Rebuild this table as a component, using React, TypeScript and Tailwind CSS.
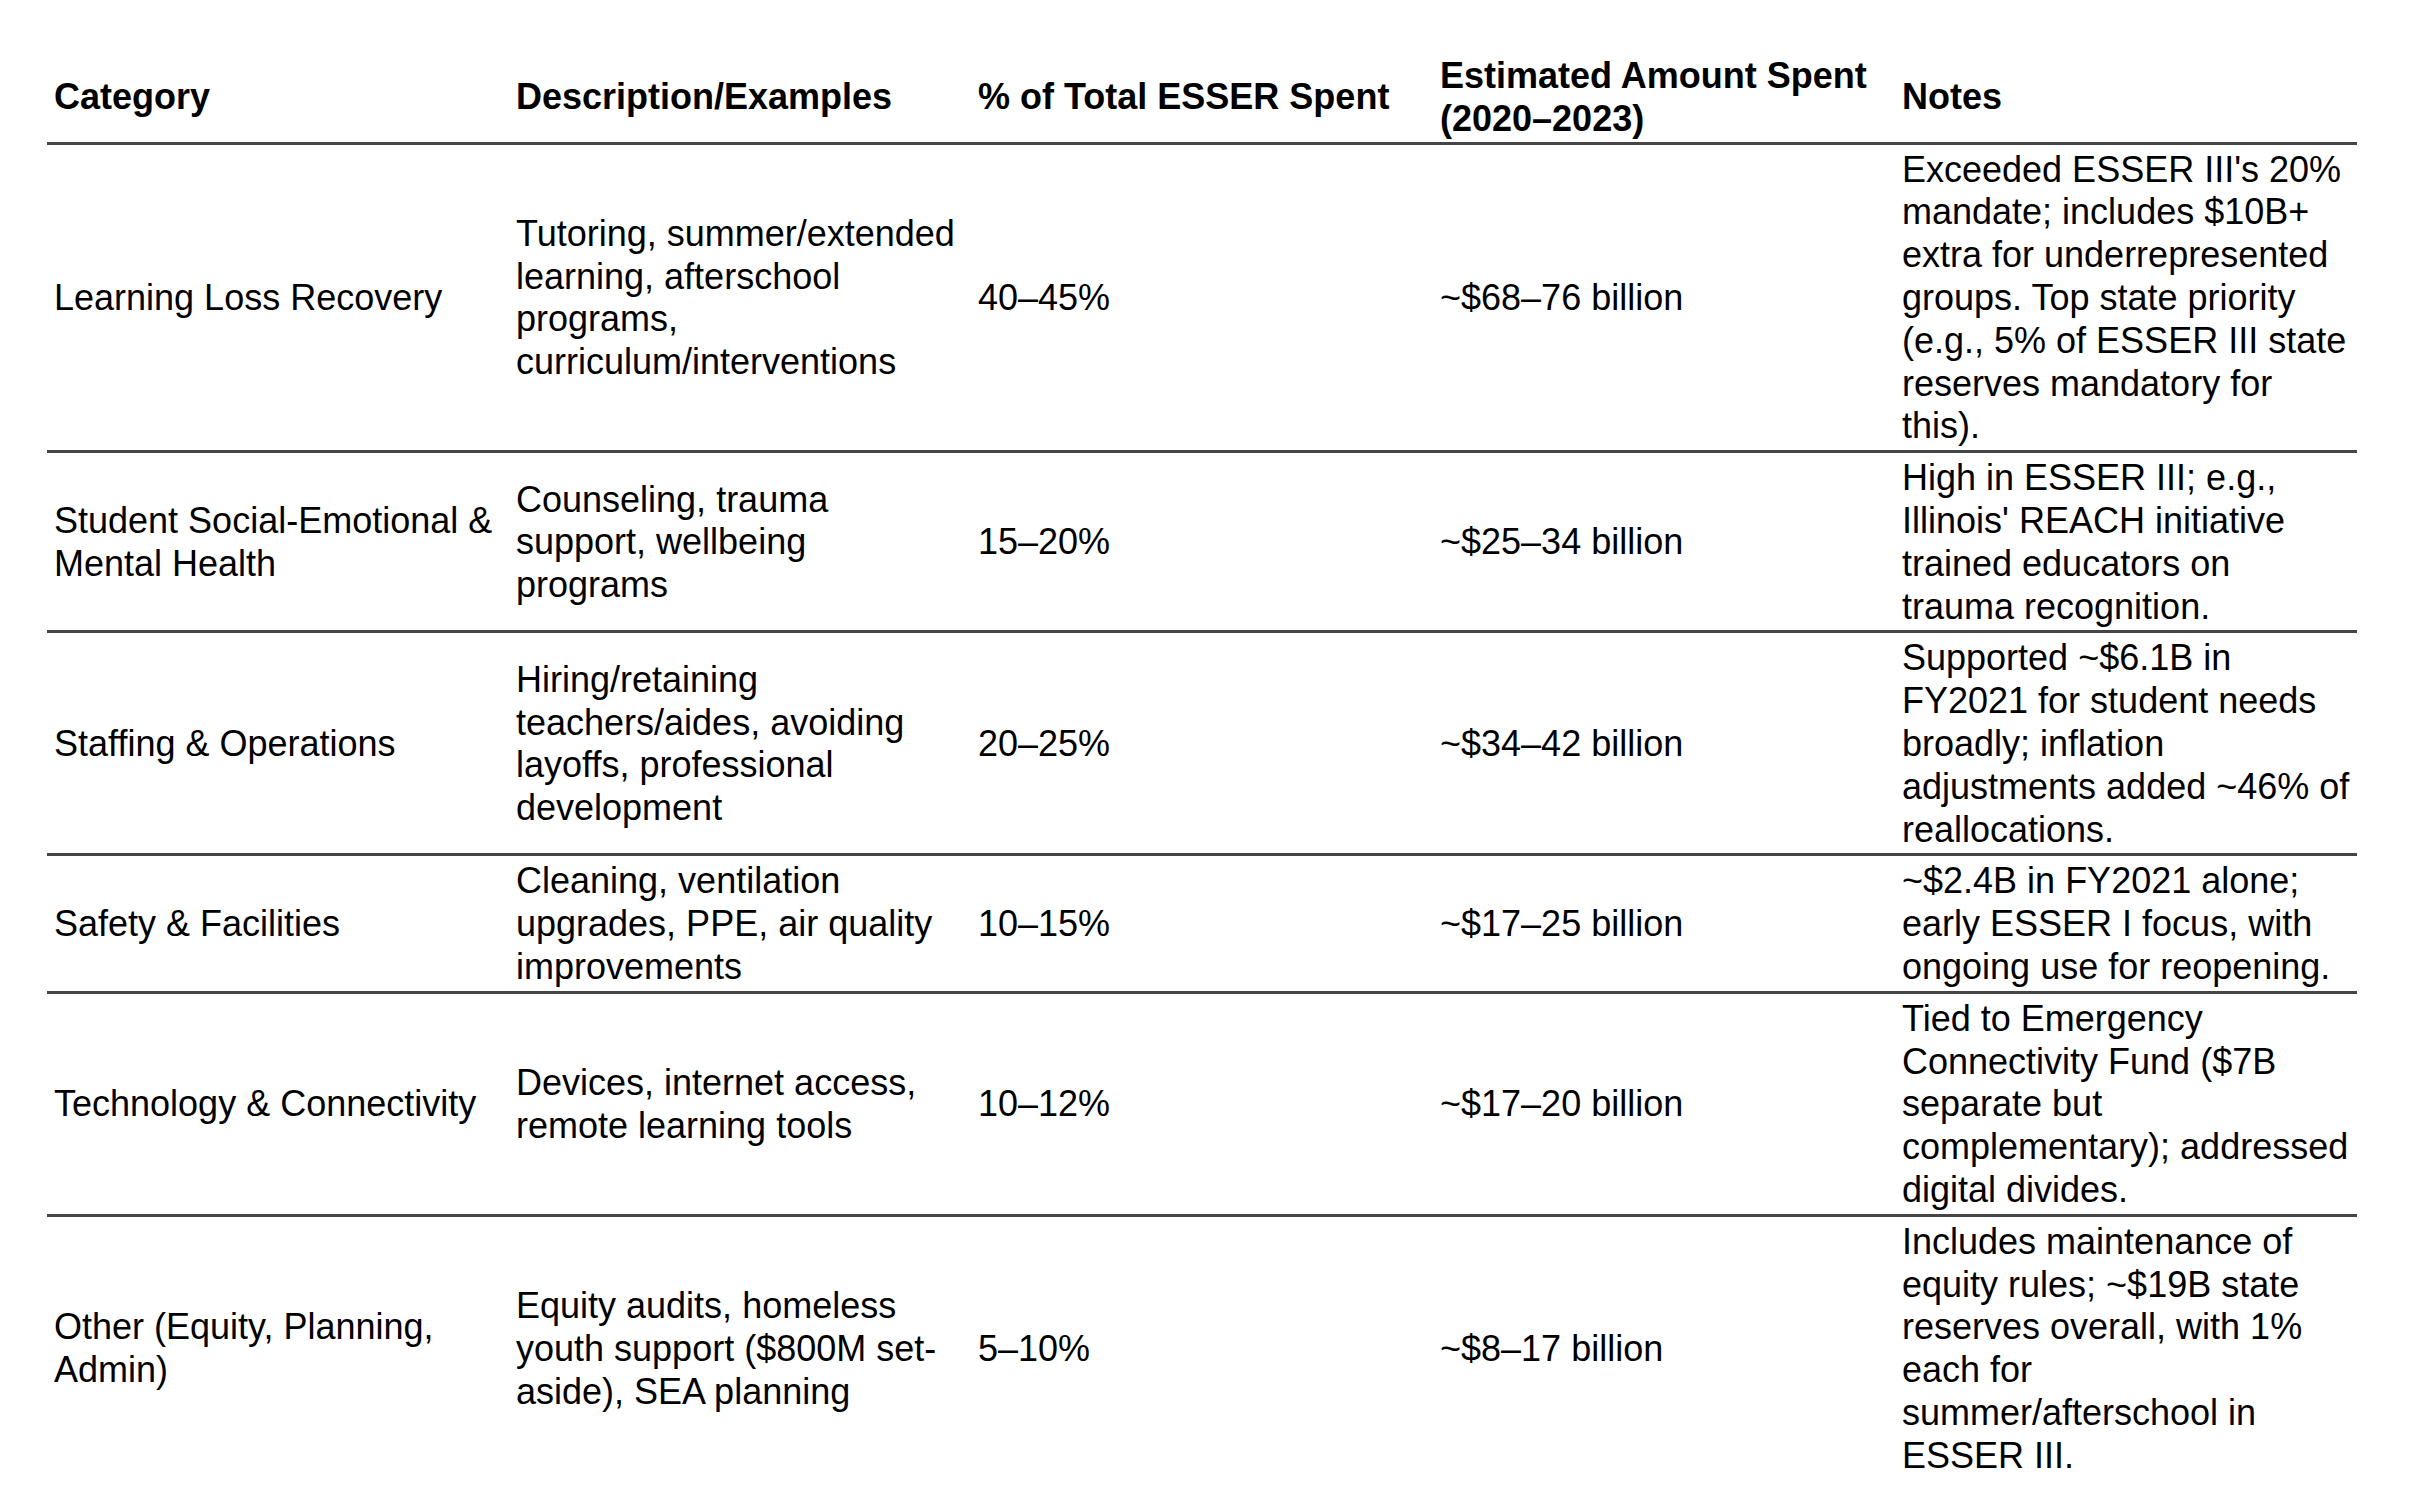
const headers = [
  "Category",
  "Description/Examples",
  "% of Total ESSER Spent",
  "Estimated Amount Spent (2020–2023)",
  "Notes",
]

const rows = [
  [
    "Learning Loss Recovery",
    "Tutoring, summer/extended learning, afterschool programs, curriculum/interventions",
    "40–45%",
    "~$68–76 billion",
    "Exceeded ESSER III's 20% mandate; includes $10B+ extra for underrepresented groups. Top state priority (e.g., 5% of ESSER III state reserves mandatory for this).",
  ],
  [
    "Student Social-Emotional & Mental Health",
    "Counseling, trauma support, wellbeing programs",
    "15–20%",
    "~$25–34 billion",
    "High in ESSER III; e.g., Illinois' REACH initiative trained educators on trauma recognition.",
  ],
  [
    "Staffing & Operations",
    "Hiring/retaining teachers/aides, avoiding layoffs, professional development",
    "20–25%",
    "~$34–42 billion",
    "Supported ~$6.1B in FY2021 for student needs broadly; inflation adjustments added ~46% of reallocations.",
  ],
  [
    "Safety & Facilities",
    "Cleaning, ventilation upgrades, PPE, air quality improvements",
    "10–15%",
    "~$17–25 billion",
    "~$2.4B in FY2021 alone; early ESSER I focus, with ongoing use for reopening.",
  ],
  [
    "Technology & Connectivity",
    "Devices, internet access, remote learning tools",
    "10–12%",
    "~$17–20 billion",
    "Tied to Emergency Connectivity Fund ($7B separate but complementary); addressed digital divides.",
  ],
  [
    "Other (Equity, Planning, Admin)",
    "Equity audits, homeless youth support ($800M set-aside), SEA planning",
    "5–10%",
    "~$8–17 billion",
    "Includes maintenance of equity rules; ~$19B state reserves overall, with 1% each for summer/afterschool in ESSER III.",
  ],
]

export default function App() {
  return (
    <div className="min-h-screen bg-white px-[47px] pt-[50px] text-black font-['Liberation_Sans',Arial,sans-serif] text-[36px] leading-[42.8px]">
      <table className="w-[2310px] table-fixed border-collapse">
        <thead>
          <tr className="border-b-[3px] border-[#454545]">
            {headers.map((h) => (
              <th key={h} className="w-[462px] pl-[7px] pr-[5px] pt-[5px] pb-[1px] text-left align-middle font-bold">
                {h}
              </th>
            ))}
          </tr>
        </thead>
        <tbody>
          {rows.map((r, i) => (
            <tr key={i} className={i < rows.length - 1 ? "border-b-[3px] border-[#454545]" : ""}>
              {r.map((c, j) => (
                <td key={j} className="pl-[7px] pr-[5px] pt-[4px] pb-[2px] align-middle">
                  {c}
                </td>
              ))}
            </tr>
          ))}
        </tbody>
      </table>
    </div>
  )
}
